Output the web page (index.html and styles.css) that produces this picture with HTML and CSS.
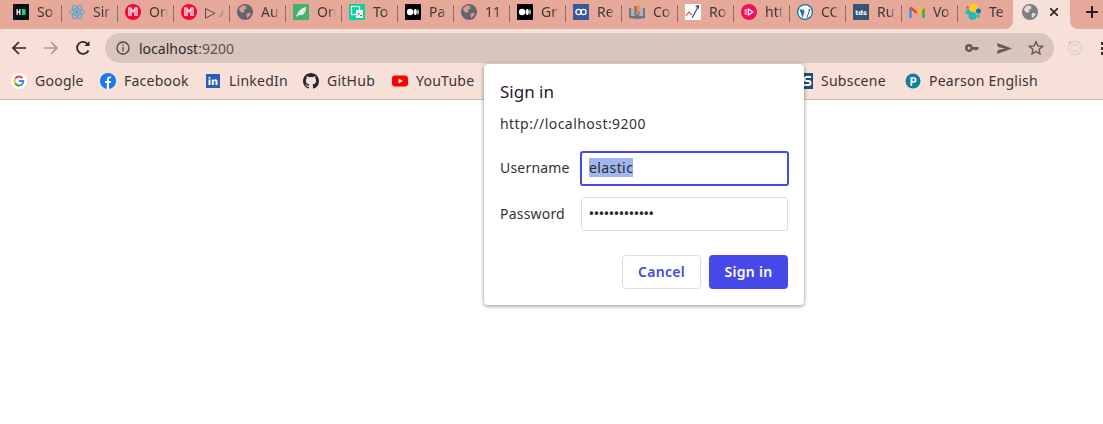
FILE: index.html

```html
<!DOCTYPE html>
<html>
<head>
    <title>localhost:9200</title>
    <link rel="stylesheet" href="styles.css">
</head>
<body>
    <!-- shared favicons -->
    <svg class="defs" width="0" height="0">
        <symbol id="globe" viewBox="0 0 16 16">
            <circle cx="8" cy="8" r="8" fill="#62666c"/>
            <path d="M5 1.500l4 .5.5 2.500L7 5.500l.5 2L5 9 2.500 7 2 5zM10.500 9h3l-.5 2.500-3 2.500-.5-3z" fill="#d39c8e"/>
        </symbol>
        <symbol id="globe-active" viewBox="0 0 16 16">
            <circle cx="8" cy="8" r="8" fill="#7c7f83"/>
            <path d="M5 1.500l4 .5.5 2.500L7 5.500l.5 2L5 9 2.500 7 2 5zM10.500 9h3l-.5 2.500-3 2.500-.5-3z" fill="#ecd7cf"/>
        </symbol>
        <symbol id="magenta" viewBox="0 0 16 16">
            <circle cx="8" cy="8" r="8" fill="#f0073b"/>
            <path d="M4 12V4h2l2 4 2-4h2v8M6 5v7M10 5v7" fill="none" stroke="#fff" stroke-width="1.2"/>
        </symbol>
        <symbol id="medium" viewBox="0 0 16 16">
            <rect width="16" height="16" rx="1" fill="#000"/>
            <circle cx="5" cy="8" r="3.200" fill="#fff"/>
            <ellipse cx="10.200" cy="8" rx="1.600" ry="3" fill="#fff"/>
            <ellipse cx="13" cy="8" rx=".7" ry="2.700" fill="#fff"/>
        </symbol>
    </svg>

    <div class="tabstrip">
        <div class="tab tab-first">
            <svg class="fav" viewBox="0 0 16 16"><rect width="16" height="16" rx="1" fill="#0b0f1a"/><path d="M3.500 5h1.200v2.300h1.600V5h1.200v6H6.300V8.500H4.700V11H3.500z" fill="#fff"/><rect x="9" y="5" width="3.500" height="6" fill="#00e070"/></svg>
            <span class="tab-title">So</span>
        </div>
        <div class="tab">
            <svg class="fav" viewBox="0 0 16 16" fill="none" stroke="#5aa5d8" stroke-width="1"><ellipse cx="8" cy="8" rx="7.500" ry="3"/><ellipse cx="8" cy="8" rx="7.500" ry="3" transform="rotate(60 8 8)"/><ellipse cx="8" cy="8" rx="7.500" ry="3" transform="rotate(120 8 8)"/><circle cx="8" cy="8" r="1.400" fill="#5aa5d8"/></svg>
            <span class="tab-title">Sir</span>
        </div>
        <div class="tab"><svg class="fav"><use href="#magenta"/></svg><span class="tab-title">On</span></div>
        <div class="tab"><svg class="fav"><use href="#magenta"/></svg><span class="tab-title">▷ A</span></div>
        <div class="tab"><svg class="fav"><use href="#globe"/></svg><span class="tab-title">Au</span></div>
        <div class="tab">
            <svg class="fav" viewBox="0 0 16 16"><rect width="16" height="16" fill="#46b06c"/><path d="M3 13c1-5 5-9 10-10 0 6-3 9-7 8z" fill="#d8f0df"/></svg>
            <span class="tab-title">On</span>
        </div>
        <div class="tab">
            <svg class="fav" viewBox="0 0 16 16"><rect width="16" height="16" rx="1" fill="#05d69e"/><rect x="2.500" y="2.500" width="8" height="8" fill="none" stroke="#fff" stroke-width="1.200"/><rect x="7" y="6" width="7" height="8" fill="#fff"/><path d="M8.500 8.500l2 1.500-2 1.500M11 11.500h2" fill="none" stroke="#157" stroke-width=".8"/></svg>
            <span class="tab-title">To</span>
        </div>
        <div class="tab"><svg class="fav"><use href="#medium"/></svg><span class="tab-title">Pa</span></div>
        <div class="tab"><svg class="fav"><use href="#globe"/></svg><span class="tab-title">11</span></div>
        <div class="tab"><svg class="fav"><use href="#medium"/></svg><span class="tab-title">Gr</span></div>
        <div class="tab">
            <svg class="fav" viewBox="0 0 16 16"><rect width="16" height="16" fill="#3b5998"/><circle cx="5.500" cy="8" r="2.600" fill="none" stroke="#fff" stroke-width="1.300"/><circle cx="10.500" cy="8" r="2.600" fill="none" stroke="#fff" stroke-width="1.300"/></svg>
            <span class="tab-title">Re</span>
        </div>
        <div class="tab">
            <svg class="fav" viewBox="0 0 16 16"><path d="M0 4l8 2 8-2v10l-8 1-8-1z" fill="#6f7480"/><rect x="2" y="5" width="4" height="7" fill="#a9b2bd"/><rect x="10" y="5" width="4" height="7" fill="#a9b2bd"/><rect x="5" y="2" width="3" height="5" fill="#d85a6a"/><rect x="8" y="1" width="3" height="6" fill="#d8a14a"/><rect x="5" y="7" width="3" height="4" fill="#58a868"/><rect x="8" y="7" width="3" height="4" fill="#d86a9a"/></svg>
            <span class="tab-title">Co</span>
        </div>
        <div class="tab">
            <svg class="fav" viewBox="0 0 16 16"><rect width="16" height="16" fill="#fff"/><path d="M1 12l3-4 3 3" fill="none" stroke="#e2574c" stroke-width="1.200"/><path d="M7 14l6-11" fill="none" stroke="#27527f" stroke-width="1.200"/><path d="M10 2l4-1v4z" fill="#27527f"/></svg>
            <span class="tab-title">Ro</span>
        </div>
        <div class="tab">
            <svg class="fav" viewBox="0 0 16 16"><circle cx="8" cy="8" r="8" fill="#f0105c"/><path d="M7.500 5v6l4.500-3z" fill="none" stroke="#fff" stroke-width="1.200"/><path d="M4.200 5v6M5.800 5v6" stroke="#fff" stroke-width=".8"/></svg>
            <span class="tab-title">htt</span>
        </div>
        <div class="tab">
            <svg class="fav" viewBox="0 0 16 16"><circle cx="8" cy="8" r="8" fill="#21759b"/><circle cx="8" cy="8" r="6.700" fill="#fff"/><path d="M2.500 5.500h4l3 8 2-6c.5-1 0-2 0-2.500h2l-3.500 10L7.500 7l-1.800 7z" fill="#21759b"/></svg>
            <span class="tab-title">CC</span>
        </div>
        <div class="tab">
            <svg class="fav" viewBox="0 0 16 16"><rect width="16" height="16" fill="#355476"/><text class="tds" x="8" y="10.500">tds</text></svg>
            <span class="tab-title">Ru</span>
        </div>
        <div class="tab">
            <svg class="fav" viewBox="0 0 16 16" fill="none" stroke-width="2.400"><path d="M1.500 14V4" stroke="#4285f4"/><path d="M14.500 14V4" stroke="#34a853"/><path d="M1.500 3.500L8 9" stroke="#ea4335"/><path d="M14.500 3.500L8 9" stroke="#fbbc05"/></svg>
            <span class="tab-title">Vo</span>
        </div>
        <div class="tab tab-last">
            <svg class="fav" viewBox="0 0 16 16"><circle cx="8.500" cy="4" r="4" fill="#fed10a"/><circle cx="3" cy="8" r="2.500" fill="#24bbb1"/><circle cx="7.500" cy="12" r="4" fill="#24bbb1"/><circle cx="13.500" cy="7" r="2.500" fill="#0077cc"/><circle cx="13" cy="12" r="2" fill="#3ebeb0"/><circle cx="2.500" cy="3.500" r="1.500" fill="#f04e98"/></svg>
            <span class="tab-title">Te</span>
        </div>
        <div class="tab-active">
            <svg class="fav"><use href="#globe-active"/></svg>
            <svg class="tab-close" viewBox="0 0 8 8" fill="none" stroke="#222" stroke-width="1.600"><path d="M0 0l8 8M8 0L0 8"/></svg>
        </div>
        <div class="new-tab">
            <svg class="plus" viewBox="0 0 12 12" fill="none" stroke="#222" stroke-width="2"><path d="M6 0v12M0 6h12"/></svg>
        </div>
    </div>

    <div class="toolbar">
        <svg class="nav" viewBox="0 0 16 16" fill="none" stroke="#2a2a2a" stroke-width="1.700"><path d="M15 8H2M8 2L2 8l6 6"/></svg>
        <svg class="nav" viewBox="0 0 16 16" fill="none" stroke="#a39a96" stroke-width="1.700"><path d="M1 8h13M8 2l6 6-6 6"/></svg>
        <svg class="nav" viewBox="0 0 16 16" fill="none" stroke="#2a2a2a" stroke-width="1.800"><path d="M13.500 10.500A6 6 0 1 1 13 4.500"/><path d="M14.500 1v5h-5z" fill="#2a2a2a" stroke="none"/></svg>
        <div class="omnibox">
            <svg class="info" viewBox="0 0 14 14" fill="none" stroke="#4d4743" stroke-width="1.300"><circle cx="7" cy="7" r="6"/><path d="M7 6v4.500M7 3.500v1.300"/></svg>
            <span class="url">localhost<span class="url-port">:9200</span></span>
            <svg class="omni-icon key" viewBox="0 0 14 8"><path d="M4 0a4 4 0 1 0 3.700 5.500H9L10 6.500l1-1 1 1 2-2.500-1-1H7.700A4 4 0 0 0 4 0zm0 2.500a1.500 1.500 0 1 1 0 3 1.500 1.500 0 0 1 0-3z" fill="#625b57" fill-rule="evenodd"/></svg>
            <svg class="omni-icon send" viewBox="0 0 15 11"><path d="M0 0l15 5.500L0 11l1-4 7-1.500L1 4z" fill="#625b57"/></svg>
            <svg class="omni-icon star" viewBox="0 0 16 16" fill="none" stroke="#625b57" stroke-width="1.400"><path d="M8 1.800l1.900 4.100 4.500.5-3.300 3 .9 4.500L8 11.600l-4 2.300.9-4.500-3.300-3 4.500-.5z"/></svg>
        </div>
        <svg class="ext" viewBox="0 0 16 16" fill="none" stroke="#dcd3cf" stroke-width="1.400"><circle cx="8" cy="8" r="6.800"/><circle cx="8" cy="8" r="3.500"/><circle cx="3" cy="2.500" r="1.500" fill="#cfc5c0" stroke="none"/></svg>
        <div class="menu-dots"><i></i><i></i><i></i></div>
    </div>

    <div class="bookmarks">
        <div class="bm bm-google">
            <svg class="bm-icon" viewBox="0 0 16 16"><circle cx="8" cy="8" r="8" fill="#fff"/><g fill="none" stroke-width="2"><path d="M11.500 5A4.500 4.500 0 0 0 4.200 5.600" stroke="#ea4335"/><path d="M4.200 5.600a4.500 4.500 0 0 0 0 4.800" stroke="#fbbc05"/><path d="M4.200 10.400A4.500 4.500 0 0 0 11 11.400" stroke="#34a853"/><path d="M8 8h4.300A4.500 4.500 0 0 1 11 11.400" stroke="#4285f4"/></g></svg>
            Google
        </div>
        <div class="bm bm-facebook">
            <svg class="bm-icon" viewBox="0 0 16 16"><circle cx="8" cy="8" r="8" fill="#1877f2"/><path d="M6.800 16V10H5V8h1.800V6.300C6.800 4.400 8 3.400 9.600 3.400l1.500.1v1.800h-1c-.8 0-1.100.5-1.100 1.100V8h2l-.3 2H9v6z" fill="#fff"/></svg>
            Facebook
        </div>
        <div class="bm bm-linkedin">
            <svg class="bm-icon" viewBox="0 0 16 16"><rect x="1" y="1" width="14" height="14" fill="#2d5bb5"/><path d="M3.500 6.500h2V12h-2zM3.500 4h2v1.600h-2zM6.800 6.500h1.900v.8c.4-.6 1-1 1.800-1 1.400 0 2 .9 2 2.400V12h-2V9.100c0-.7-.2-1.100-.8-1.100s-1 .5-1 1.100V12h-1.900z" fill="#fff"/></svg>
            LinkedIn
        </div>
        <div class="bm bm-github">
            <svg class="bm-icon" viewBox="0 0 16 16"><path fill="#24292e" d="M8 0C3.580 0 0 3.580 0 8c0 3.540 2.290 6.530 5.470 7.590.4.070.55-.17.550-.38v-1.340c-2.230.48-2.700-1.070-2.700-1.070-.36-.92-.89-1.170-.89-1.170-.73-.5.050-.49.050-.49.8.060 1.230.82 1.230.82.710 1.220 1.870.87 2.330.66.070-.52.280-.87.500-1.070-1.780-.2-3.640-.89-3.640-3.950 0-.87.310-1.590.82-2.150-.08-.2-.36-1.020.08-2.120 0 0 .67-.21 2.200.82a7.600 7.600 0 0 1 4 0c1.530-1.040 2.200-.82 2.200-.82.44 1.100.16 1.920.08 2.120.51.560.82 1.270.82 2.150 0 3.070-1.870 3.750-3.650 3.950.290.250.54.730.54 1.480v2.200c0 .210.150.460.550.380A8 8 0 0 0 16 8c0-4.420-3.580-8-8-8z"/></svg>
            GitHub
        </div>
        <div class="bm bm-youtube">
            <svg class="bm-icon" viewBox="0 0 16 16"><rect y="2.500" width="16" height="11" rx="3" fill="#f00"/><path d="M6.500 5.500L11 8l-4.500 2.500z" fill="#fff"/></svg>
            YouTube
        </div>
        <div class="bm bm-subscene">
            <svg class="bm-icon" viewBox="0 0 16 16"><rect width="16" height="16" fill="#1e5078"/><path d="M14 4H9.500a2 2 0 0 0 0 4h2a2 2 0 0 1 0 4H7" fill="none" stroke="#fff" stroke-width="2"/></svg>
            Subscene
        </div>
        <div class="bm">
            <svg class="bm-icon" viewBox="0 0 16 16"><circle cx="8" cy="8" r="7.500" fill="#0f7ea4"/><path d="M5.500 4.200h3.300a2.800 2.800 0 0 1 0 5.600H7.200V13H5.500z" fill="#fff"/><circle cx="8.500" cy="7" r="1.200" fill="#0f7ea4"/></svg>
            Pearson English
        </div>
    </div>

    <div class="dialog">
        <h2 class="dialog-title">Sign in</h2>
        <p class="dialog-origin">http://localhost:9200</p>
        <div class="field">
            <label class="field-label">Username</label>
            <div class="input input-focus"><span class="selected">elastic</span></div>
        </div>
        <div class="field">
            <label class="field-label">Password</label>
            <div class="input input-pass">•••••••••••••</div>
        </div>
        <div class="dialog-actions">
            <button class="btn btn-cancel">Cancel</button>
            <button class="btn btn-primary">Sign in</button>
        </div>
    </div>
</body>
</html>
```

FILE: styles.css

```css
html, body { margin: 0; padding: 0; height: 100%; background: #fff; overflow: hidden; }
body { font-family: "Noto Sans", "Open Sans", sans-serif; color: #2f2b29; position: relative; }
.defs { position: absolute; }

.tabstrip { display: flex; height: 29px; background: #f7e0d8; }
.tab { width: 56px; flex: none; box-sizing: border-box; padding: 0 0 5px 7px; display: flex; align-items: center; position: relative; background: #e5a899; }
.tab::after { content: ""; position: absolute; right: 0; top: 5px; bottom: 7px; width: 1px; background: #8f6f65; }
.tab-first { width: 62px; padding-left: 13px; }
.tab-last { width: 55px; border-bottom-right-radius: 8px; }
.tab-last::after { display: none; }
.fav { width: 16px; height: 16px; flex: none; }
.tab-title { margin-left: 8px; width: 19px; overflow: hidden; white-space: nowrap; font-size: 14px; line-height: 20px; color: #3f3835; -webkit-mask-image: linear-gradient(90deg, #000 60%, transparent); mask-image: linear-gradient(90deg, #000 60%, transparent); }
.tab-active { width: 57px; flex: none; box-sizing: border-box; padding: 0 0 5px 9px; display: flex; align-items: center; }
.tab-close { width: 8px; height: 8px; margin-left: 12px; flex: none; }
.new-tab { flex: 1; display: flex; align-items: center; padding: 0 0 5px 16px; background: #e5a899; border-bottom-left-radius: 8px; }
.plus { width: 12px; height: 12px; flex: none; }

.toolbar { display: flex; align-items: center; height: 38px; background: #f7e0d8; overflow: hidden; }
.nav { width: 16px; height: 16px; flex: none; margin: 0 6px 0 10px; }
.nav:first-child { margin-left: 11px; }
.omnibox { display: flex; align-items: center; flex: none; width: 949px; height: 30px; margin-left: 8px; border-radius: 15px; background: #d9c5bd; }
.info { width: 14px; height: 14px; margin-left: 11px; flex: none; }
.url { margin-left: 9px; font-size: 14px; color: #2f2b29; flex: 1; }
.url-port { color: #5b534f; }
.omni-icon { flex: none; }
.key { width: 14px; height: 8px; margin-right: 18px; }
.send { width: 15px; height: 11px; margin-right: 16px; }
.star { width: 16px; height: 16px; margin-right: 10px; }
.ext { width: 16px; height: 16px; margin-left: 13px; flex: none; }
.menu-dots { margin-left: 18px; display: flex; flex-direction: column; gap: 2px; flex: none; }
.menu-dots i { display: block; width: 3px; height: 3px; background: #333; }

.bookmarks { display: flex; align-items: center; height: 27px; padding-bottom: 5px; background: #f7e0d8; border-bottom: 1px solid #cdbdb7; font-size: 14px; letter-spacing: .25px; color: #3a3532; }
.bm { display: flex; align-items: center; gap: 8px; white-space: nowrap; flex: none; }
.bm-icon { width: 16px; height: 16px; flex: none; }
.bm-google { margin-left: 11px; width: 89px; }
.bm-facebook { width: 105px; }
.bm-linkedin { width: 98px; }
.bm-github { width: 89px; }
.bm-youtube { width: 405px; }
.bm-subscene { width: 108px; }

.dialog { position: absolute; left: 484px; top: 64px; width: 320px; height: 241px; box-sizing: border-box; padding: 16px 16px 16px; background: #fff; border-radius: 4px; box-shadow: 0 1px 4px rgba(0, 0, 0, .45); }
.dialog-title { margin: 0; font-size: 17px; line-height: 23px; font-weight: 400; color: #1f1b2a; }
.dialog-origin { margin: 11px 0 17px; font-size: 14px; line-height: 20px; letter-spacing: .45px; color: #333; }
.field { display: flex; align-items: center; margin-bottom: 12px; font-size: 14px; }
.field-label { width: 81px; flex: none; padding-bottom: 2px; letter-spacing: .2px; color: #333; }
.input { flex: 1; box-sizing: border-box; height: 34px; line-height: 30px; padding: 0 7px; border: 1px solid #ddd; border-radius: 3px; color: #2a2a2a; }
.input-focus { margin: 0 -1px -1px -1px; height: 35px; border: 2px solid #4549e8; line-height: 29px; letter-spacing: .4px; }
.selected { background: #9fb6ee; }
.input-pass { font-size: 13px; font-weight: 600; letter-spacing: .1px; }
.dialog-actions { display: flex; justify-content: flex-end; gap: 8px; margin-top: 24px; }
.btn { height: 34px; padding: 0 0 2px; font: 600 14px "Noto Sans", "Open Sans", sans-serif; letter-spacing: .3px; border-radius: 4px; box-sizing: border-box; }
.btn-cancel { width: 79px; background: #fff; color: #4549e8; border: 1px solid #ddd; }
.btn-primary { width: 79px; background: #4549e8; color: #fff; border: none; }
.tds { font: bold 6.500px "DejaVu Sans", sans-serif; fill: #fff; text-anchor: middle; }
```
